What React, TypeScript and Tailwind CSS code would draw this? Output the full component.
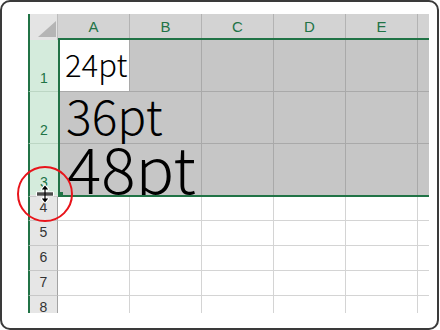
const cols = ['A', 'B', 'C', 'D', 'E']

const sheetFont = { fontFamily: '"Noto Sans CJK JP", "Noto Sans", sans-serif' }

// row header cell for the selected rows 1-3
function SelRowHead({ n, h }: { n: number; h: string }) {
  return (
    <div className={`${h} w-[30px] shrink-0 border-l-2 border-l-[#217346] border-b border-b-[#bcd6c4] bg-[#d4ebdc] flex items-end justify-center pb-[6px] text-[14px] leading-none text-[#217346]`}>
      {n}
    </div>
  )
}

function PlainRow({ n, h }: { n: number; h: string }) {
  return (
    <div className={`flex ${h} shrink-0`}>
      <div className="w-[30px] shrink-0 border-l-2 border-l-[#217346] border-r border-r-[#a3a3a3] border-b border-b-[#c8c8c8] bg-[#e6e6e6] flex items-end justify-center pb-[6px] text-[14px] leading-none text-[#333]">
        {n}
      </div>
      <div className="flex flex-1 bg-white">
        {cols.map(c => (
          <div key={c} className="w-[72px] shrink-0 border-r border-b border-[#d4d4d4]" />
        ))}
        <div className="flex-1 border-b border-[#d4d4d4]" />
      </div>
    </div>
  )
}

function ResizeCursor() {
  return (
    <svg width="20" height="20" viewBox="0 0 20 20" className="absolute left-[33px] top-[182px]">
      <g stroke="#fff" strokeWidth="2.2" strokeLinejoin="round" fill="#fff">
        <rect x="2" y="8.5" width="16" height="3" />
        <path d="M10 1.5 L6.8 5.5 H13.2 Z M10 18.5 L6.8 14.5 H13.2 Z" />
        <rect x="9" y="4" width="2" height="12" />
      </g>
      <g fill="#000">
        <rect x="2" y="8.5" width="16" height="1.2" />
        <rect x="2" y="10.3" width="16" height="1.2" />
        <path d="M10 1.5 L6.8 5.5 H13.2 Z M10 18.5 L6.8 14.5 H13.2 Z" />
        <rect x="9.4" y="4" width="1.2" height="12" />
      </g>
    </svg>
  )
}

export default function App() {
  return (
    <div className="w-[440px] h-[330px] bg-white" style={{ fontFamily: '"Liberation Sans", Arial, sans-serif' }}>
      <div className="relative w-[439px] h-[330px] border-2 border-[#3a3a3a] rounded-[10px] bg-white pl-[26px] pt-[12px] overflow-hidden">
        <div className="w-[401px] h-[299px] flex flex-col overflow-hidden">
          {/* column headers */}
          <div className="flex h-[26px] shrink-0">
            <div className="w-[30px] shrink-0 border-l-2 border-l-[#217346] border-r border-r-[#bdbdbd] bg-[#e4e4e4] flex items-end justify-end pr-[1px] pb-[3px]">
              <div className="w-[18px] h-[16px] bg-[#b5b5b5] [clip-path:polygon(100%_0,100%_100%,0_100%)]" />
            </div>
            <div className="flex flex-1 bg-[#d3d3d3] border-b-2 border-[#217346]">
              {cols.map(c => (
                <div key={c} className="w-[72px] shrink-0 border-r border-[#b3b3b3] flex items-center justify-center text-[15px] leading-none text-[#217346]">
                  {c}
                </div>
              ))}
              <div className="flex-1" />
            </div>
          </div>

          {/* row 1 */}
          <div className="flex h-[52px] shrink-0 overflow-hidden">
            <SelRowHead n={1} h="h-[52px]" />
            <div className="flex flex-1 border-l-2 border-[#217346] bg-[#c6c6c6] font-light" style={sheetFont}>
              <div className="w-[70px] shrink-0 bg-white border-r border-b border-[#a9a9a9] flex items-end pl-[5px] pb-[12px]">
                <span className="text-[31px] leading-none whitespace-nowrap text-black">24pt</span>
              </div>
              {cols.slice(1).map(c => (
                <div key={c} className="w-[72px] shrink-0 border-r border-b border-[#a9a9a9]" />
              ))}
              <div className="flex-1 border-b border-[#a9a9a9]" />
            </div>
          </div>

          {/* row 2 */}
          <div className="flex h-[52px] shrink-0 overflow-hidden">
            <SelRowHead n={2} h="h-[52px]" />
            <div className="flex flex-1 border-l-2 border-[#217346] bg-[#c6c6c6] font-light" style={sheetFont}>
              <div className="w-[70px] shrink-0 border-b border-[#a9a9a9] flex items-end pl-[6px] pb-[5px]">
                <span className="text-[48px] leading-none whitespace-nowrap text-black">36pt</span>
              </div>
              {cols.slice(1).map(c => (
                <div key={c} className="w-[72px] shrink-0 border-r border-b border-[#a9a9a9]" />
              ))}
              <div className="flex-1 border-b border-[#a9a9a9]" />
            </div>
          </div>

          {/* row 3 */}
          <div className="flex h-[51px] shrink-0 overflow-hidden">
            <div className="h-[51px] w-[30px] shrink-0 border-l-2 border-l-[#217346] bg-[#d4ebdc] flex items-end justify-center pb-[6px] text-[14px] leading-none text-[#217346]">
              3
            </div>
            <div className="flex flex-1 border-l-2 border-[#217346] bg-[#c6c6c6] font-light" style={sheetFont}>
              <div className="w-[70px] shrink-0 flex items-end pl-[7px]">
                <span className="text-[64px] leading-none whitespace-nowrap text-black -mb-[3px]">48pt</span>
              </div>
              {cols.slice(1).map(c => (
                <div key={c} className="w-[72px] shrink-0 border-r border-[#a9a9a9]" />
              ))}
              <div className="flex-1" />
            </div>
          </div>

          {/* selection bottom edge */}
          <div className="flex h-[2px] shrink-0">
            <div className="w-[30px] shrink-0 border-l-2 border-l-[#217346] border-b border-b-[#c8c8c8] bg-[#e6e6e6]" />
            <div className="flex-1 bg-[#217346]" />
          </div>

          <PlainRow n={4} h="h-[24px]" />
          <PlainRow n={5} h="h-[25px]" />
          <PlainRow n={6} h="h-[25px]" />
          <PlainRow n={7} h="h-[25px]" />
          <PlainRow n={8} h="h-[25px]" />
        </div>

        {/* fill handle */}
        <div className="absolute left-[56px] top-[190px] w-[5px] h-[5px] bg-[#217346]" />

        {/* highlight circle */}
        <div className="absolute left-[15px] top-[164px] w-[56px] h-[56px] rounded-full border-2 border-[#e8141b]" />

        <ResizeCursor />
      </div>
    </div>
  )
}
